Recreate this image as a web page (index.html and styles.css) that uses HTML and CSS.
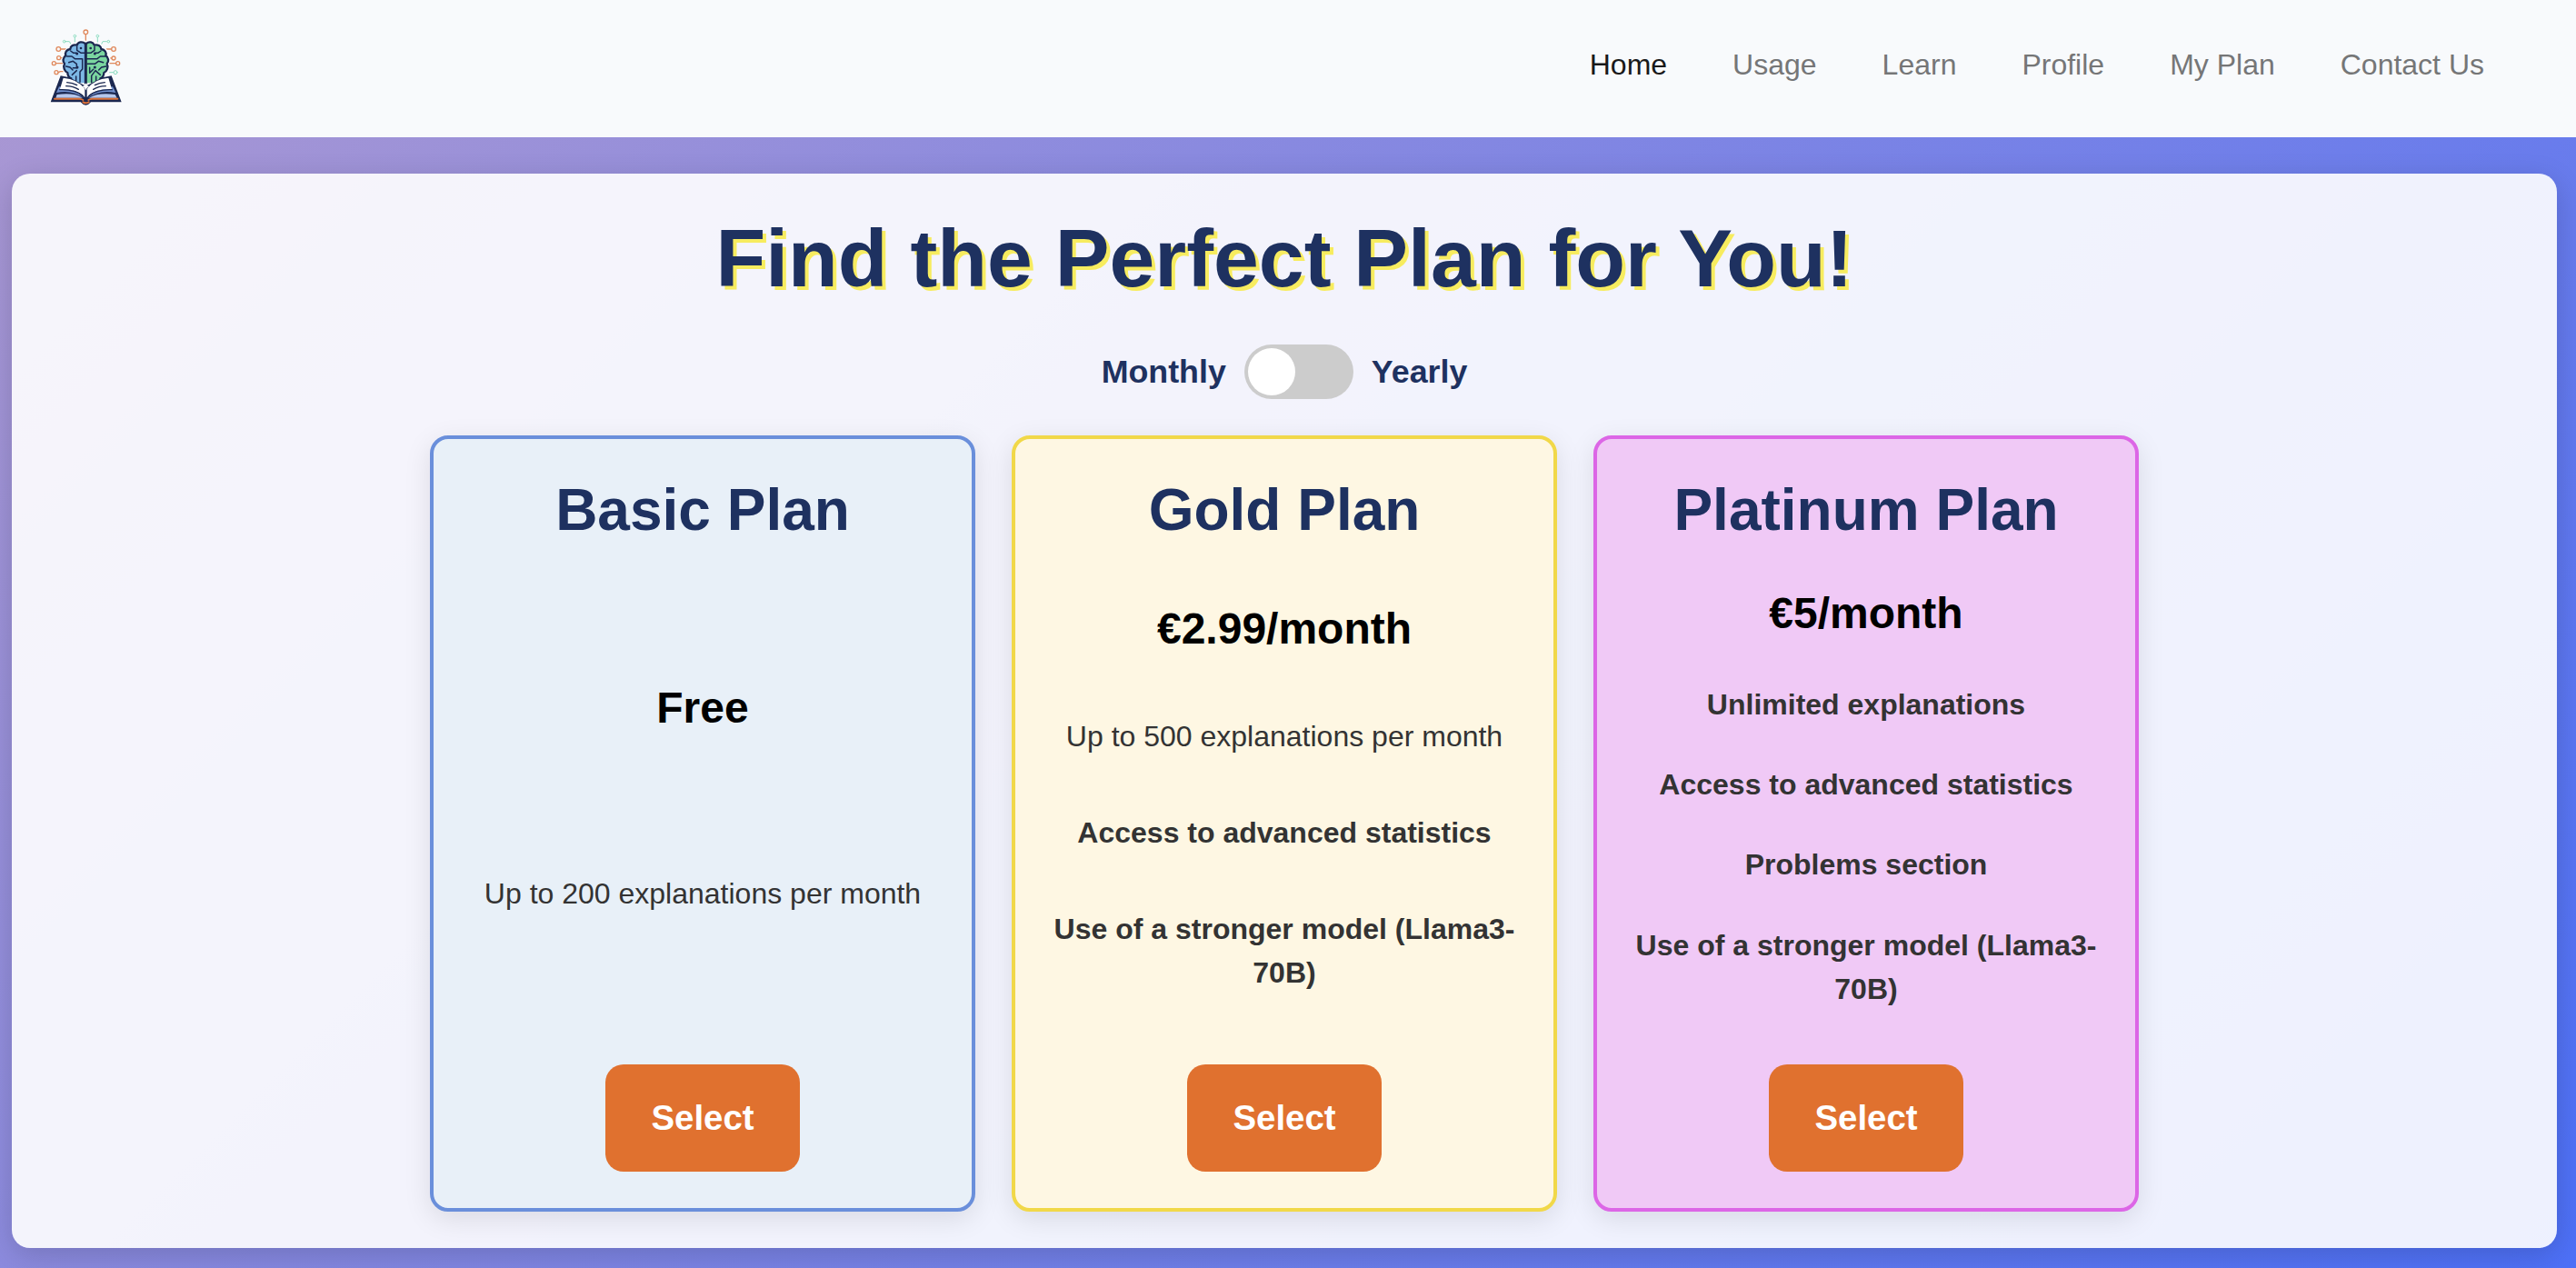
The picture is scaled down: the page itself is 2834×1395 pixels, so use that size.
FILE: index.html
```html
<!DOCTYPE html>
<html lang="en">
<head>
<meta charset="utf-8">
<title>Plans</title>
<link rel="stylesheet" href="styles.css">
</head>
<body>
<header class="navbar">
  <a class="brand" href="#" aria-label="Home">
    <svg class="logo" viewBox="0 0 330 330" fill="none" stroke-linecap="round" stroke-linejoin="round">
      <g stroke="#e08a5e" stroke-width="4">
        <path d="M163 53v25M81 102h16l6 4M246 102h-14l-10 5M81 131h12M248 132h-10M65 149h24M262 149h-20M73 179l6-3h8"/>
        <circle cx="163" cy="46" r="7"/><circle cx="73" cy="102" r="7"/><circle cx="255" cy="102" r="7"/>
        <circle cx="74" cy="131" r="6"/><circle cx="255" cy="132" r="6"/><circle cx="58" cy="149" r="6"/>
        <circle cx="269" cy="149" r="6"/><circle cx="66" cy="179" r="6"/>
      </g>
      <g stroke="#8cdcc0" stroke-width="3">
        <path d="M127 64v20M202 64v18M97 77h12l8 14M232 77h-13l-7 15M255 179h-13"/>
        <circle cx="127" cy="59" r="4"/><circle cx="202" cy="59" r="4"/><circle cx="92" cy="77" r="4"/>
        <circle cx="238" cy="77" r="4"/><circle cx="261" cy="179" r="6"/>
      </g>
      <path class="halo" d="M163 80c-9-9-26-5-29 5-13-3-22 5-22 14-12 2-17 12-14 21-11 8-12 22-5 29-6 13 0 25 10 30v15H80l-31 82h97q17 22 34 0h99l-31-82h-23v-15c12-5 17-18 10-30 8-9 6-23-5-29 3-11-4-20-14-21-1-11-11-17-22-14-4-10-19-14-27-5z"/>
      <path fill="#7db8e6" d="M163 84c-9-9-26-5-29 5-13-3-22 4-22 13-14 2-18 12-15 21-10 8-11 20-4 27-6 12 0 25 10 30 3 17 20 30 35 34h25z"/>
      <path fill="#7bd6a0" d="M163 84c9-9 24-5 28 5 13-3 23 4 23 13 13 2 18 12 15 21 10 8 11 20 4 27 6 12 0 25-10 30-3 17-20 30-35 34h-25z"/>
      <path stroke="#1b2850" stroke-width="7" d="M161 84c-9-9-24-5-27 5-13-3-22 4-22 13-14 2-18 12-15 21-10 8-11 20-4 27-6 12 0 25 10 30 0 9 5 16 12 19M165 84c9-9 22-5 26 5 13-3 23 4 23 13 13 2 18 12 15 21 10 8 11 20 4 27 6 12 0 25-10 30 0 9-5 16-12 19"/>
      <path stroke="#1b2850" stroke-width="9" d="M163 84v130"/>
      <g stroke="#1b2850" stroke-width="4.5">
        <path d="M134 94v12l14 9h13M113 108l10 7h9M101 126h16l10 8h22M107 146l14-4 12 9v8M152 134v34l-8 9v34M98 159l13 3 9 9M118 187l15-14M131 192v14M121 164h14M192 94v12l-13 9h-13M213 108l-10 7h-9M227 126h-16l-10 8h-35M221 146l-16-4-12 9h-24M230 159l-15 3-9 9M211 187l-16-14-13 17v22M176 163v18l12-12M197 192v14"/>
      </g>
      <g fill="#1b2850"><circle cx="147" cy="99" r="4"/><circle cx="179" cy="99" r="4"/><circle cx="134" cy="117" r="4.500"/><circle cx="193" cy="117" r="4.500"/><circle cx="135" cy="162" r="4.500"/><circle cx="193" cy="162" r="4.500"/></g>
      <path fill="#1b2850" d="M80 190L47 277h99q17 21 34 0h101l-33-87-30 6-55 28-53-28z"/>
      <path fill="#b4c6ec" d="M68 252q56-8 84 11H64zM260 252q-56-8-86 11h92z"/>
      <path fill="#7190ce" d="M75 226l-9 20q54-10 90 18-26-32-81-38zM252 226l10 20q-56-10-92 18 26-32 82-38z"/>
      <path fill="#fff" d="M89 197q47 4 71 36v28q-24-29-82-27zM238 197q-47 4-71 36v28q24-29 82-27z"/>
      <path stroke="#1b2850" stroke-width="4" d="M101 212q19 1 33 9M98 224q25 1 41 11M226 212q-19 1-33 9M229 224q-25 1-41 11M77 236q50-2 76 20M250 236q-50-2-76 20"/>
      <path stroke="#dd7138" stroke-width="6" d="M60 266h82q10 1 12 4M268 266h-84q-10 1-12 4M154 277q9 6 19 0"/>
      <path fill="#fff" d="M163 214l4 8 8 4-8 4-4 8-4-8-8-4 8-4z"/>
    </svg>
  </a>
  <nav class="links">
    <a class="link active" href="#">Home</a>
    <a class="link" href="#">Usage</a>
    <a class="link" href="#">Learn</a>
    <a class="link" href="#">Profile</a>
    <a class="link" href="#">My Plan</a>
    <a class="link" href="#">Contact Us</a>
  </nav>
</header>
<main class="panel">
  <h1 class="title">Find the Perfect Plan for You!</h1>
  <div class="billing">
    <span>Monthly</span>
    <span class="switch" role="switch" aria-checked="false"><span class="knob"></span></span>
    <span>Yearly</span>
  </div>
  <div class="plans">
    <section class="plan basic">
      <h2 class="name">Basic Plan</h2>
      <div class="details">
        <p class="price">Free</p>
        <p class="feature">Up to 200 explanations per month</p>
      </div>
      <button class="select">Select</button>
    </section>
    <section class="plan gold">
      <h2 class="name">Gold Plan</h2>
      <div class="details">
        <p class="price">€2.99/month</p>
        <p class="feature">Up to 500 explanations per month</p>
        <p class="feature strong">Access to advanced statistics</p>
        <p class="feature strong">Use of a stronger model (Llama3-70B)</p>
      </div>
      <button class="select">Select</button>
    </section>
    <section class="plan platinum">
      <h2 class="name">Platinum Plan</h2>
      <div class="details">
        <p class="price">€5/month</p>
        <p class="feature strong">Unlimited explanations</p>
        <p class="feature strong">Access to advanced statistics</p>
        <p class="feature strong">Problems section</p>
        <p class="feature strong">Use of a stronger model (Llama3-70B)</p>
      </div>
      <button class="select">Select</button>
    </section>
  </div>
</main>
</body>
</html>
```
FILE: styles.css
```css
* { box-sizing: border-box; }
html { height: 100%; }
body {
  margin: 0;
  height: 1395px;
  overflow: hidden;
  font-family: "Liberation Sans", Arial, sans-serif;
  font-size: 32px;
  line-height: 48px;
  color: #333;
  background: linear-gradient(135deg, #ab98d2 0%, #4d70f7 100%);
}
.navbar {
  height: 151px;
  padding: 0 101px 0 40px;
  display: flex;
  justify-content: space-between;
  background: #f8fafc;
}
.brand { padding-top: 20px; }
.logo { display: block; width: 110px; height: 110px; }
.halo { fill: #fff; stroke: #fff; stroke-width: 10; }
.links { display: flex; gap: 72px; padding-top: 47px; }
.link { color: #757677; text-decoration: none; }
.link.active { color: #19191a; }
.panel {
  width: 2800px;
  height: 1182px;
  margin: 40px 0 0 13px;
  padding: 40px;
  border-radius: 20px;
  background: rgba(255, 255, 255, 0.9);
  box-shadow: 0 8px 32px rgba(0, 0, 0, 0.16);
}
.title {
  margin: 0 0 42px;
  font-size: 89.6px;
  line-height: 106px;
  text-align: center;
  color: #1e3160;
  text-shadow: 4px 4px 0 #f7ec5f;
}
.billing {
  display: flex;
  justify-content: center;
  align-items: center;
  gap: 20px;
  height: 60px;
  margin-bottom: 40px;
  font-size: 35.8px;
  font-weight: bold;
  color: #1e3160;
}
.switch {
  display: flex;
  width: 120px;
  height: 60px;
  padding: 4px;
  border-radius: 30px;
  background: #ccc;
}
.knob { width: 52px; height: 52px; border-radius: 50%; background: #fff; }
.plans { display: flex; justify-content: center; gap: 40px; }
.plan {
  display: flex;
  flex-direction: column;
  align-items: center;
  width: 600px;
  height: 854px;
  padding: 40px;
  border: 4px solid;
  border-radius: 20px;
  text-align: center;
  box-shadow: 0 8px 30px rgba(0, 0, 0, 0.1);
}
.basic { background: #e8f0f8; border-color: #6a8fdb; }
.gold { background: #fef7e3; border-color: #f1d849; }
.platinum { background: #f0c9f6; border-color: #dc66e6; }
.name { margin: 0; font-size: 64px; line-height: 76px; color: #1e3160; }
.details {
  flex: 1;
  display: flex;
  flex-direction: column;
  justify-content: space-evenly;
  padding: 19.4px 0 39px;
}
.price {
  margin: 20px 0;
  font-size: 48px;
  line-height: 72px;
  font-weight: bold;
  color: #000;
}
.feature { margin: 20px 0; }
.strong { font-weight: bold; }
.select {
  width: 214px;
  height: 118px;
  border: 0;
  border-radius: 20px;
  background: #e0712f;
  color: #fff;
  font: bold 38.4px "Liberation Sans", Arial, sans-serif;
}
```
